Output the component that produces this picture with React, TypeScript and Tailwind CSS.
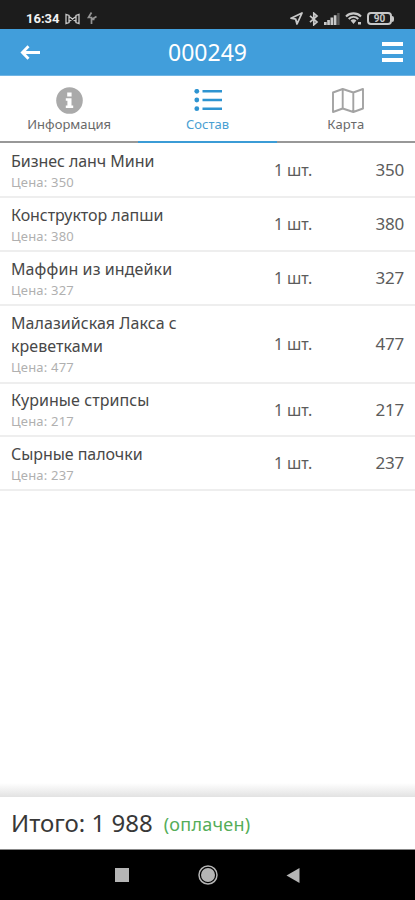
import { clsx } from "clsx";

type OrderItem = {
  name: string;
  price: number;
  tracking: string;
  height: string;
};

const ITEMS: OrderItem[] = [
  { name: "Бизнес ланч Мини", price: 350, tracking: "tracking-[-0.05px]", height: "h-[54px]" },
  { name: "Конструктор лапши", price: 380, tracking: "tracking-[-0.05px]", height: "h-[54px]" },
  { name: "Маффин из индейки", price: 327, tracking: "tracking-[0.1px]", height: "h-[54px]" },
  { name: "Малазийская Лакса с креветками", price: 477, tracking: "tracking-[0.05px]", height: "h-[78px]" },
  { name: "Куриные стрипсы", price: 217, tracking: "tracking-[0.08px]", height: "h-[53px]" },
  { name: "Сырные палочки", price: 237, tracking: "tracking-[-0.05px]", height: "h-[54px]" },
];

function StatusBar() {
  return (
    <div className="flex h-[29px] shrink-0 items-center bg-[#1c1c1c] pt-2 pr-[21px] pl-[26px] text-[#c8c8c8]">
      <span className="w-[35px] font-['Roboto'] text-[13px] leading-none font-bold whitespace-nowrap text-[#f2f2f2]">
        16:34
      </span>
      <svg className="ml-[4px]" width="15" height="12" viewBox="0 0 15 12" fill="none" stroke="currentColor" strokeWidth="1.3">
        <path d="M1 1.5V10.5L4 9.5V2.5ZM14 1.5V10.5L11 9.5V2.5ZM4 3.5L11 8.5M4 8.5L11 3.5" />
      </svg>
      <svg className="ml-[7px]" width="11" height="13" viewBox="0 0 11 13" fill="none" stroke="currentColor" strokeWidth="1.7">
        <path d="M4.5 0.5L1.5 5.5H4.5V12M4.5 7.5L9.5 4.5M4.5 7.5H7.5" opacity="0.7" />
      </svg>
      <div className="ml-auto flex items-center">
        <svg width="13" height="13" viewBox="0 0 13 13" fill="none" stroke="currentColor" strokeWidth="1.8" strokeLinejoin="round">
          <path d="M12 1L1 6.2L5.7 7.2L7 12Z" />
        </svg>
        <svg className="ml-[6px]" width="10" height="14" viewBox="0 0 10 14" fill="none" stroke="currentColor" strokeWidth="1.7">
          <path d="M1 3.8L8 10L4.8 12.8V1.2L8 4L1 10.2" />
        </svg>
        <svg className="ml-[5px]" width="16" height="12" viewBox="0 0 16 12" fill="currentColor">
          <path d="M0 9H2.7V12H0ZM3.2 7H5.9V12H3.2ZM6.5 4.5H9.2V12H6.5ZM9.8 2.2H12.5V12H9.8Z" />
          <path d="M13.2 0H15.6V12H13.2Z" opacity="0.35" />
        </svg>
        <svg className="ml-[5px]" width="18" height="13" viewBox="0 0 18 13" fill="none" stroke="currentColor" strokeWidth="2.1">
          <path d="M1 4.4C5.3 0.4 11.7 0.4 16 4.4M3.7 7C6.5 4.4 10.5 4.4 13.3 7" />
          <path d="M5.6 8.5Q8.5 6.2 11.4 8.5L8.5 12Z" fill="currentColor" stroke="none" />
          <path d="M13 10H16V12.5H13Z" fill="currentColor" stroke="none" />
        </svg>
        <div className="ml-[4px] flex h-[13px] w-[25px] items-center justify-center rounded-[4px] border-2 border-current font-['Roboto'] text-[10px] leading-none font-bold">
          90
        </div>
        <span className="h-[6px] w-[2px] rounded-r-full bg-current" />
      </div>
    </div>
  );
}

function Header() {
  return (
    <header className="flex h-[47px] shrink-0 items-center border-b border-[#70b5e4] bg-[#419edb] pr-[12px] pl-[20px] text-white">
      <svg width="21" height="15" viewBox="0 0 21 15" fill="none" stroke="currentColor" strokeWidth="2.8">
        <path d="M20 7.5H3M8.5 1.2L2.4 7.5L8.5 13.8" />
      </svg>
      <h1 className="flex-1 pt-px pr-[8px] text-center text-[23px] leading-none">000249</h1>
      <div className="flex w-[21px] flex-col gap-[4px]">
        <span className="h-[4px] bg-current" />
        <span className="h-[4px] bg-current" />
        <span className="h-[4px] bg-current" />
      </div>
    </header>
  );
}

function InfoIcon() {
  return (
    <svg width="27" height="27" viewBox="0 0 27 27">
      <circle cx="13.5" cy="13.5" r="13.3" fill="#aaa" />
      <path
        d="M11.2 5.5H15.6V9.4H11.2ZM9.8 11.3H15.5V18.4H17.2V21H9.8V18.4H11.4V13.8H9.8Z"
        fill="#fff"
      />
    </svg>
  );
}

function ListIcon() {
  return (
    <svg width="28" height="23" viewBox="0 0 28 23" fill="#2e94d1">
      <circle cx="2.8" cy="2.3" r="2.4" />
      <circle cx="2.8" cy="11" r="2.4" />
      <circle cx="2.8" cy="19.7" r="2.4" />
      <path d="M8.5 1H28V3.6H8.5ZM8.5 9.7H28V12.3H8.5ZM8.5 18.4H28V21H8.5Z" />
    </svg>
  );
}

function MapIcon() {
  return (
    <svg width="32" height="25" viewBox="0 0 32 25" fill="none" stroke="#a3a3a3" strokeWidth="1.9" strokeLinejoin="round">
      <path d="M1 4.5L10.7 1L21.3 4.5L31 1V20.5L21.3 24L10.7 20.5L1 24ZM10.7 1V20.5M21.3 4.5V24" />
    </svg>
  );
}

const TABS = [
  { label: "Информация", icon: <InfoIcon />, active: false, iconPad: "", text: "" },
  { label: "Состав", icon: <ListIcon />, active: true, iconPad: "pl-[1px]", text: "" },
  { label: "Карта", icon: <MapIcon />, active: false, iconPad: "pl-[4px]", text: "tracking-[0.15px]" },
];

function Tabs() {
  return (
    <nav className="grid h-[67px] shrink-0 grid-cols-3">
      {TABS.map((tab) => (
        <button
          key={tab.label}
          type="button"
          className={clsx(
            "flex flex-col items-center border-b-2 pt-[10px]",
            tab.active ? "border-[#3b9cd6] text-[#499fd3]" : "border-[#989898] text-[#696969]"
          )}
        >
          <span className={clsx("flex h-[28px] items-center", tab.iconPad)}>{tab.icon}</span>
          <span className={clsx("mt-[2px] text-[13px] leading-[17px]", tab.text)}>{tab.label}</span>
        </button>
      ))}
    </nav>
  );
}

function ItemRow({ item }: { item: OrderItem }) {
  return (
    <li className={clsx("flex items-center border-b-2 border-[#eee] pr-[11px] pl-[11px]", item.height)}>
      <div className="w-[184px]">
        <p className={clsx("text-[16px] leading-[23px] text-[#484848]", item.tracking)}>{item.name}</p>
        <p className="text-[13px] leading-[18px] tracking-[0.2px] text-[#b0b0b0]">Цена: {item.price}</p>
      </div>
      <span className="ml-[79px] text-[16px] tracking-[-0.1px] whitespace-nowrap text-[#5c5c5c]">1 шт.</span>
      <span className="ml-auto text-[17px] tracking-[-0.2px] text-[#5c5c5c]">{item.price}</span>
    </li>
  );
}

function NavBar() {
  return (
    <div className="flex h-[50px] shrink-0 items-center bg-black pl-[115px] text-[#b5b5b5]">
      <span className="h-[14px] w-[14px] bg-current" />
      <svg className="ml-[69px]" width="20" height="20" viewBox="0 0 20 20">
        <circle cx="10" cy="10" r="9" fill="none" stroke="currentColor" strokeWidth="1.5" />
        <circle cx="10" cy="10" r="7" fill="currentColor" />
      </svg>
      <svg className="ml-[68px]" width="14" height="15" viewBox="0 0 14 15" fill="currentColor">
        <path d="M13.5 0V15L0.5 7.5Z" />
      </svg>
    </div>
  );
}

export default function App() {
  return (
    <div className="flex h-[900px] w-[415px] flex-col overflow-hidden bg-white font-['Noto_Sans','Open_Sans',sans-serif]">
      <StatusBar />
      <Header />
      <Tabs />
      <ul className="flex-1 pt-px">
        {ITEMS.map((item) => (
          <ItemRow key={item.name} item={item} />
        ))}
      </ul>
      <div className="h-[14px] shrink-0 bg-linear-to-b from-white to-[#e2e2e2]" />
      <footer className="flex h-[53px] shrink-0 items-center border-b border-[#888] pl-[11px]">
        <span className="text-[24px] whitespace-nowrap text-[#383838]">Итого: 1 988</span>
        <span className="ml-[11px] pt-[2px] text-[18px] tracking-[0.25px] text-[#54ad58]">(оплачен)</span>
      </footer>
      <NavBar />
    </div>
  );
}
